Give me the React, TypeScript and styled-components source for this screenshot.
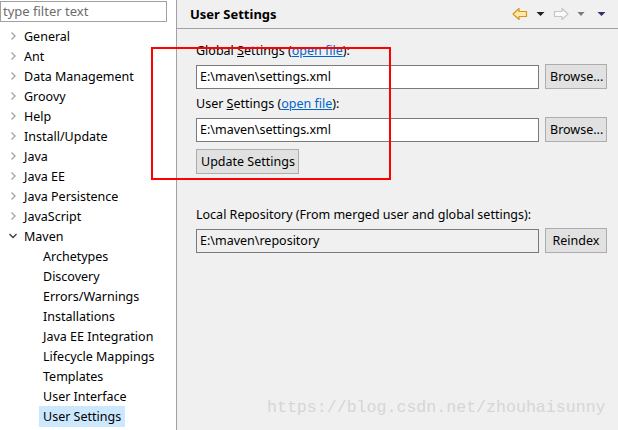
import styled, { createGlobalStyle } from 'styled-components';

const Global = createGlobalStyle`
  html, body { margin: 0; padding: 0; }
  body {
    width: 618px;
    height: 430px;
    overflow: hidden;
    font-family: "Noto Sans", "Open Sans", sans-serif;
    font-size: 12.5px;
    color: #000;
    background: #f0f0f0;
  }
`;

const Page = styled.div`
  position: relative;
  display: flex;
  width: 618px;
  height: 430px;
  overflow: hidden;
`;

const Sidebar = styled.div`
  width: 176px;
  flex: none;
  background: #fff;
  border-right: 1px solid #a0a0a0;
  display: flex;
  flex-direction: column;
`;

const Filter = styled.div`
  margin: 1px 0 0 0;
  width: 163px;
  height: 19px;
  border: 1px solid #a0a0a0;
  box-sizing: content-box;
  color: #6d6d6d;
  font-size: 13px;
  line-height: 19px;
  padding-left: 2px;
`;

const Tree = styled.ul`
  list-style: none;
  margin: 4px 0 0 0;
  padding: 0;
`;

const Row = styled.li<{ $child?: boolean }>`
  height: 20px;
  display: flex;
  align-items: center;
  padding-left: ${p => (p.$child ? '39px' : '6px')};
`;

const Label = styled.span<{ $selected?: boolean }>`
  display: inline-block;
  padding: 0 4px;
  height: 21px;
  line-height: 21px;
  white-space: nowrap;
  background: ${p => (p.$selected ? '#cce8ff' : 'transparent')};
`;

const Twisty = styled.span`
  width: 14px;
  height: 20px;
  display: flex;
  align-items: center;
  justify-content: center;
`;

const Main = styled.div`
  flex: 1;
  display: flex;
  flex-direction: column;
`;

const Header = styled.div`
  height: 28px;
  border-bottom: 1px solid #a0a0a0;
  display: flex;
  align-items: center;
  padding: 0 12px 0 13px;
`;

const Title = styled.div`
  font-weight: bold;
  font-size: 13px;
  flex: 1;
`;

const Nav = styled.div`
  display: flex;
  align-items: center;
`;

const Spacer = styled.span<{ $w: number }>`
  width: ${p => p.$w}px;
`;

const Body = styled.div`
  padding: 13px 11px 0 19px;
  display: flex;
  flex-direction: column;
`;

const FieldLabel = styled.div<{ $gap?: number }>`
  height: 17px;
  line-height: 17px;
  white-space: nowrap;
  margin-top: ${p => p.$gap ?? 0}px;
`;

const Link = styled.span`
  color: #0066cc;
  text-decoration: underline;
`;

const Field = styled.div`
  display: flex;
  gap: 6px;
  margin-top: 5px;
  align-items: center;
  height: 25px;
`;

const Input = styled.div<{ $readonly?: boolean }>`
  flex: 1;
  height: 22px;
  line-height: 22px;
  border: 1px solid #7a7a7a;
  background: ${p => (p.$readonly ? '#f0f0f0' : '#fff')};
  padding-left: 3px;
`;

const Button = styled.div`
  height: 23px;
  line-height: 23px;
  border: 1px solid #adadad;
  background: #e1e1e1;
  padding: 0 4px;
  text-align: center;
  white-space: nowrap;
  box-sizing: content-box;
`;

const SideButton = styled(Button)`
  width: 52px;
`;

const UpdateButton = styled(Button)`
  align-self: flex-start;
  margin-top: 7px;
  width: 93px;
`;

const Highlight = styled.div`
  position: absolute;
  left: 151px;
  top: 47px;
  width: 236px;
  height: 129px;
  border: 2px solid #ff0000;
  pointer-events: none;
`;

const Watermark = styled.div`
  position: absolute;
  left: 267px;
  top: 398px;
  font-family: "Liberation Mono", "DejaVu Sans Mono", monospace;
  font-size: 16.6px;
  color: #d6d6d6;
  white-space: nowrap;
`;

const Chevron = ({ open }: { open?: boolean }) => (
  <svg width="8" height="8" viewBox="0 0 8 8">
    {open ? (
      <path d="M0.5 2 L4 5.5 L7.5 2" fill="none" stroke="#404040" strokeWidth="1.4" />
    ) : (
      <path d="M2.5 0.5 L6 4 L2.5 7.5" fill="none" stroke="#a6a6a6" strokeWidth="1.4" />
    )}
  </svg>
);

const Drop = ({ color, w = 9 }: { color: string; w?: number }) => (
  <svg width={w} height="6" viewBox={`0 0 ${w} 6`}>
    <path d={`M0.5 1 H${w - 0.5} L${w / 2} 5 Z`} fill={color} />
  </svg>
);

const BackArrow = () => (
  <svg width="16" height="14" viewBox="0 0 16 14">
    <path d="M1 7 L7 1.5 V4.5 H14.5 V9.5 H7 V12.5 Z" fill="#ffe9a8" stroke="#d9941c" strokeWidth="1.2" strokeLinejoin="round" />
  </svg>
);

const ForwardArrow = () => (
  <svg width="16" height="14" viewBox="0 0 16 14">
    <path d="M15 7 L9 1.5 V4.5 H1.5 V9.5 H9 V12.5 Z" fill="#fafafa" stroke="#c6c6c6" strokeWidth="1.2" strokeLinejoin="round" />
  </svg>
);

const top = ['General', 'Ant', 'Data Management', 'Groovy', 'Help', 'Install/Update', 'Java', 'Java EE', 'Java Persistence', 'JavaScript'];
const children = ['Archetypes', 'Discovery', 'Errors/Warnings', 'Installations', 'Java EE Integration', 'Lifecycle Mappings', 'Templates', 'User Interface', 'User Settings'];

export default function App() {
  return (
    <>
      <Global />
      <Page>
        <Sidebar>
          <Filter>type filter text</Filter>
          <Tree>
            {top.map(t => (
              <Row key={t}>
                <Twisty><Chevron /></Twisty>
                <Label>{t}</Label>
              </Row>
            ))}
            <Row>
              <Twisty><Chevron open /></Twisty>
              <Label>Maven</Label>
            </Row>
            {children.map(c => (
              <Row key={c} $child>
                <Label $selected={c === 'User Settings'}>{c}</Label>
              </Row>
            ))}
          </Tree>
        </Sidebar>
        <Main>
          <Header>
            <Title>User Settings</Title>
            <Nav>
              <BackArrow />
              <Spacer $w={8} />
              <Drop color="#202020" />
              <Spacer $w={8} />
              <ForwardArrow />
              <Spacer $w={8} />
              <Drop color="#7a7a7a" w={8} />
              <Spacer $w={12} />
              <Drop color="#3c2a70" />
            </Nav>
          </Header>
          <Body>
            <FieldLabel>Global <u>S</u>ettings (<Link>open file</Link>):</FieldLabel>
            <Field>
              <Input>E:\maven\settings.xml</Input>
              <SideButton>Browse...</SideButton>
            </Field>
            <FieldLabel $gap={6}>User <u>S</u>ettings (<Link>open file</Link>):</FieldLabel>
            <Field>
              <Input>E:\maven\settings.xml</Input>
              <SideButton>Browse...</SideButton>
            </Field>
            <UpdateButton>Update Settings</UpdateButton>
            <FieldLabel $gap={32}>Local Repository (From merged user and global settings):</FieldLabel>
            <Field>
              <Input $readonly>E:\maven\repository</Input>
              <SideButton>Reindex</SideButton>
            </Field>
          </Body>
        </Main>
        <Highlight />
        <Watermark>https://blog.csdn.net/zhouhaisunny</Watermark>
      </Page>
    </>
  );
}
